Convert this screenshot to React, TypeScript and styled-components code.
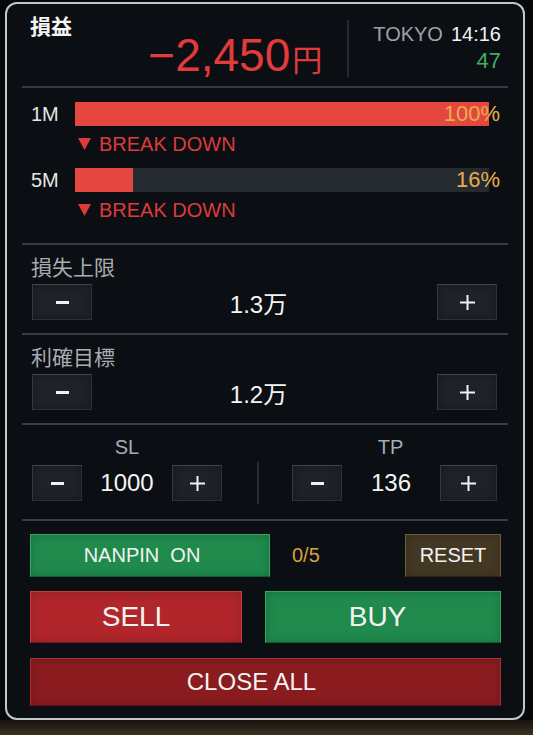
import React from 'react';
import styled, { createGlobalStyle } from 'styled-components';

const GlobalStyle = createGlobalStyle`
html, body {
    margin: 0;
    padding: 0;
    background: #06080b;
}
body {
    font-family: "Liberation Sans", "Noto Sans CJK JP", sans-serif;
    color: #f2f2f2;
}
`;

const Page = styled.div`
width: 533px;
height: 735px;
display: flex;
flex-direction: column;
overflow: hidden;
`;

const Panel = styled.div`
box-sizing: border-box;
width: 520px;
height: 718px;
margin: 2px 8px 0 5px;
border: 2px solid #c3c6ca;
border-radius: 12px;
background: #0b0e13;
display: flex;
flex-direction: column;
`;

const Ground = styled.div`
flex: 1;
background: linear-gradient(180deg, #15130f 0%, #3a3224 100%);
`;

const Divider = styled.div`
height: 2px;
margin: 0 15px;
background: #343c46;
`;

/* header */

const Header = styled.div`
height: 85px;
padding: 11px 22px 0 23px;
box-sizing: border-box;
display: flex;
align-items: flex-start;
`;

const PnlBlock = styled.div`
flex: 1;
display: flex;
flex-direction: column;
`;

const PnlTitle = styled.div`
font-size: 21px;
line-height: 24px;
font-weight: 700;
color: #f4f4f4;
`;

const PnlAmount = styled.div`
align-self: flex-end;
margin-top: -7px;
font-size: 46px;
line-height: 46px;
color: #e23b3b;
white-space: nowrap;
`;

const Yen = styled.span`
font-size: 30px;
margin-left: 2px;
`;

const HeaderRule = styled.div`
width: 2px;
height: 57px;
margin: 5px 24px 0 25px;
background: #252a31;
`;

const ClockBlock = styled.div`
margin-top: 9px;
display: flex;
flex-direction: column;
align-items: flex-end;
`;

const ClockLine = styled.div`
font-size: 20px;
line-height: 20px;
white-space: nowrap;
`;

const City = styled.span`
color: #9ea2a7;
margin-right: 8px;
`;

const Seconds = styled.div`
margin-top: 6px;
font-size: 22px;
line-height: 22px;
color: #3fae5e;
`;

/* trend bars */

const Trends = styled.div`
padding: 14px 0 23px 23px;
`;

const BarRow = styled.div<{ $gap?: number }>`
display: flex;
align-items: center;
height: 24px;
margin-top: ${(p) => p.$gap ?? 0}px;
`;

const BarLabel = styled.div`
width: 44px;
font-size: 20px;
color: #e6e6e6;
padding-left: 1px;
`;

const Track = styled.div`
position: relative;
width: 414px;
height: 24px;
background: #252a31;
`;

const Fill = styled.div`
height: 100%;
background: #e5463f;
`;

const Percent = styled.span`
position: absolute;
right: -11px;
top: 0;
font-size: 22px;
line-height: 24px;
color: #e6ae4a;
`;

const Signal = styled.div`
display: flex;
align-items: center;
gap: 8px;
margin-top: 8px;
padding-left: 48px;
font-size: 20px;
line-height: 20px;
color: #dc3b3b;
`;

/* steppers */

const Stepper = styled.div`
padding: 11px 26px 13px 25px;
`;

const FieldLabel = styled.div`
margin-left: -1px;
font-size: 21px;
line-height: 24px;
color: #a8acb1;
`;

const StepRow = styled.div`
display: flex;
align-items: center;
height: 36px;
margin-top: 4px;
`;

const StepButton = styled.button<{ $w: number }>`
width: ${(p) => p.$w}px;
height: 36px;
padding: 0;
display: flex;
align-items: center;
justify-content: center;
background: #1f2329;
border: 1px solid #2c3138;
border-top-color: #40464f;
border-left-color: #363b43;
box-shadow: inset 0 0 8px rgba(0, 0, 0, 0.35);
`;

const StepValue = styled.div`
flex: 1;
text-align: center;
padding-right: 12px;
font-size: 24px;
color: #f4f4f4;
`;

/* SL / TP */

const Orders = styled.div`
padding: 12px 26px 15px 25px;
display: flex;
align-items: flex-start;
`;

const OrderGroup = styled.div<{ $w: number; $plus: number }>`
width: ${(p) => p.$w}px;
display: grid;
grid-template-columns: 50px 1fr ${(p) => p.$plus}px;
grid-template-rows: 20px 36px;
row-gap: 8px;
align-items: center;
`;

const OrderLabel = styled.div<{ $shift: number }>`
grid-column: 1 / -1;
padding-right: ${(p) => p.$shift}px;
text-align: center;
font-size: 20px;
line-height: 20px;
color: #a8acb1;
`;

const OrderValue = styled.div`
text-align: center;
font-size: 24px;
color: #f4f4f4;
`;

const OrderRule = styled.div`
width: 2px;
height: 42px;
margin: 25px 33px 0 35px;
background: #262b32;
`;

/* actions */

const Actions = styled.div`
padding: 13px 22px 12px 23px;
display: flex;
flex-direction: column;
`;

const ActionRow = styled.div<{ $h: number; $gap?: number }>`
display: flex;
align-items: center;
gap: 23px;
height: ${(p) => p.$h}px;
margin-top: ${(p) => p.$gap ?? 0}px;
`;

const tones = {
    green: { bg: '#1f8a4b', edge: '#35a563' },
    red: { bg: '#b0262a', edge: '#cc3d3f' },
    wine: { bg: '#8a1c20', edge: '#a63234' },
    brown: { bg: '#433823', edge: '#6d5c3b' },
};

const ActionButton = styled.button<{ $tone: keyof typeof tones; $w?: number; $size: number; $shift?: number }>`
box-sizing: border-box;
height: 100%;
${(p) => (p.$w ? `width: ${p.$w}px;` : 'flex: 1;')}
padding: 0 ${(p) => p.$shift ?? 0}px 0 0;
background: ${(p) => tones[p.$tone].bg};
border: 1px solid ${(p) => tones[p.$tone].edge};
border-bottom-color: rgba(0, 0, 0, 0.35);
color: #f3f3f3;
font-family: "Liberation Sans", sans-serif;
font-size: ${(p) => p.$size}px;
white-space: pre;
box-shadow: inset 0 0 10px rgba(0, 0, 0, 0.18);
`;

const Counter = styled.span`
margin-left: -1px;
font-size: 20px;
color: #d8a23c;
flex: 1;
`;

const MinusIcon = () => (
    <svg width="13" height="3" viewBox="0 0 13 3">
        <rect width="13" height="3" fill="#f2f2f2" />
    </svg>
);

const PlusIcon = () => (
    <svg width="15" height="15" viewBox="0 0 15 15">
        <rect x="6.5" y="0" width="2" height="15" fill="#f2f2f2" />
        <rect x="0" y="6.5" width="15" height="2" fill="#f2f2f2" />
    </svg>
);

const DownTriangle = () => (
    <svg width="13" height="12" viewBox="0 0 13 12">
        <polygon points="0,0 13,0 6.5,12" fill="#dc3b3b" />
    </svg>
);

const trends = [
    { label: '1M', pct: 100, fill: 100 },
    { label: '5M', pct: 16, fill: 14 },
];

const limits = [
    { label: '損失上限', value: '1.3万' },
    { label: '利確目標', value: '1.2万' },
];

const App: React.FunctionComponent = () => {
    return (
        <Page>
            <GlobalStyle />
            <Panel>
                <Header>
                    <PnlBlock>
                        <PnlTitle>損益</PnlTitle>
                        <PnlAmount>−2,450<Yen>円</Yen></PnlAmount>
                    </PnlBlock>
                    <HeaderRule />
                    <ClockBlock>
                        <ClockLine><City>TOKYO</City>14:16</ClockLine>
                        <Seconds>47</Seconds>
                    </ClockBlock>
                </Header>
                <Divider />

                <Trends>
                    {trends.map((t, i) => (
                        <React.Fragment key={t.label}>
                            <BarRow $gap={i === 0 ? 0 : 14}>
                                <BarLabel>{t.label}</BarLabel>
                                <Track>
                                    <Fill style={{ width: `${t.fill}%` }} />
                                    <Percent>{t.pct}%</Percent>
                                </Track>
                            </BarRow>
                            <Signal><DownTriangle />BREAK DOWN</Signal>
                        </React.Fragment>
                    ))}
                </Trends>

                {limits.map((l) => (
                    <React.Fragment key={l.label}>
                        <Divider />
                        <Stepper>
                            <FieldLabel>{l.label}</FieldLabel>
                            <StepRow>
                                <StepButton $w={60}><MinusIcon /></StepButton>
                                <StepValue>{l.value}</StepValue>
                                <StepButton $w={60}><PlusIcon /></StepButton>
                            </StepRow>
                        </Stepper>
                    </React.Fragment>
                ))}
                <Divider />

                <Orders>
                    <OrderGroup $w={190} $plus={50}>
                        <OrderLabel $shift={0}>SL</OrderLabel>
                        <StepButton $w={50}><MinusIcon /></StepButton>
                        <OrderValue>1000</OrderValue>
                        <StepButton $w={50}><PlusIcon /></StepButton>
                    </OrderGroup>
                    <OrderRule />
                    <OrderGroup $w={205} $plus={57}>
                        <OrderLabel $shift={8}>TP</OrderLabel>
                        <StepButton $w={50}><MinusIcon /></StepButton>
                        <OrderValue>136</OrderValue>
                        <StepButton $w={57}><PlusIcon /></StepButton>
                    </OrderGroup>
                </Orders>
                <Divider />

                <Actions>
                    <ActionRow $h={43}>
                        <ActionButton $tone="green" $w={240} $size={20} $shift={16}>NANPIN  ON</ActionButton>
                        <Counter>0/5</Counter>
                        <ActionButton $tone="brown" $w={96} $size={20}>RESET</ActionButton>
                    </ActionRow>
                    <ActionRow $h={52} $gap={14}>
                        <ActionButton $tone="red" $w={212} $size={28}>SELL</ActionButton>
                        <ActionButton $tone="green" $size={28} $shift={11}>BUY</ActionButton>
                    </ActionRow>
                    <ActionRow $h={48} $gap={15}>
                        <ActionButton $tone="wine" $size={24} $shift={28}>CLOSE ALL</ActionButton>
                    </ActionRow>
                </Actions>
            </Panel>
            <Ground />
        </Page>
    );
};

export default App;
